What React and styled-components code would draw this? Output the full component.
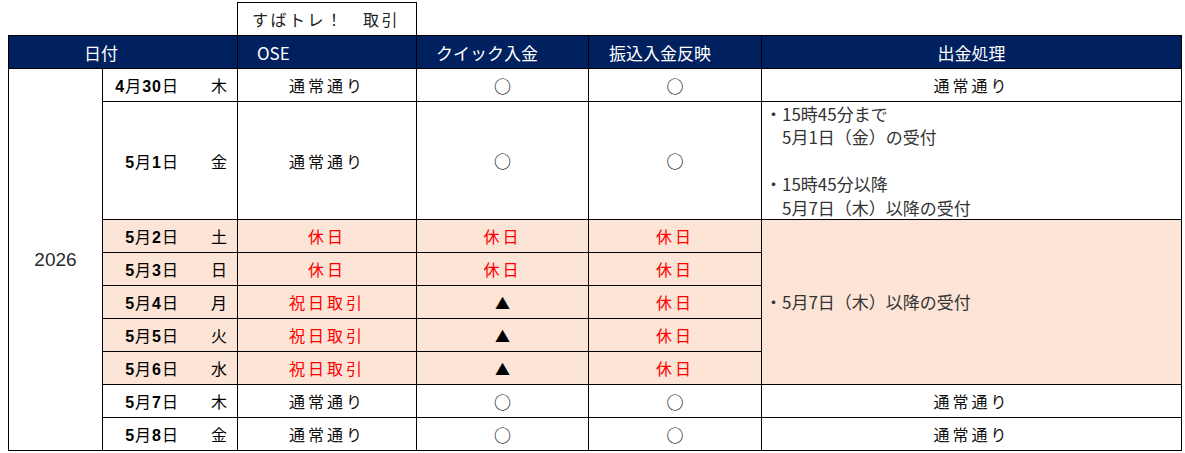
import styled, { createGlobalStyle } from "styled-components";

const GlobalStyle = createGlobalStyle`
  body {
    margin: 0;
    background: #fff;
    font-family: "Noto Sans CJK JP", "Liberation Sans", sans-serif;
  }
`;

const Table = styled.table`
  border-collapse: collapse;
  table-layout: fixed;
  width: 1173px;
  margin: 2px 0 0 8px;
`;

const Col = styled.col`
  width: ${(p) => p.$w}px;
`;

const Row = styled.tr`
  height: ${(p) => (p.$tall ? 117 : 33)}px;
`;

const Blank = styled.td`
  border: none;
  padding: 0;
`;

const TopLabel = styled.td`
  border: 1px solid #000;
  border-bottom: none;
  padding: 0 0 0 14px;
  font-size: 16px;
  letter-spacing: 2.5px;
  color: #222;
  white-space: nowrap;
`;

const Head = styled.th`
  background: #002060;
  color: #fff;
  border: 1px solid #000;
  font-weight: normal;
  font-size: 17px;
  padding: 0 0 0 ${(p) => p.$indent || 0}px;
  text-align: ${(p) => (p.$center ? "center" : "left")};
  white-space: nowrap;
`;

const Cell = styled.td`
  border: 1px solid #000;
  padding: 0;
  text-align: center;
  font-size: 16px;
  letter-spacing: 3px;
  color: ${(p) => (p.$red ? "#ff0000" : "#111")};
  background: ${(p) => (p.$pink ? "#fce4d6" : "#fff")};
  white-space: nowrap;
`;

const YearCell = styled.td`
  border: 1px solid #000;
  text-align: center;
  font-family: "Liberation Sans", sans-serif;
  font-size: 19px;
  color: #2b2b2b;
`;

const DateCell = styled.td`
  border: 1px solid #000;
  padding: 0;
  background: ${(p) => (p.$pink ? "#fce4d6" : "#fff")};
`;

const DateWrap = styled.div`
  display: flex;
  align-items: center;
  font-size: 16px;
  color: #000;
`;

const DateText = styled.span`
  width: 76px;
  text-align: right;
  white-space: nowrap;
  letter-spacing: 1px;
  font-family: "Liberation Sans", "Noto Sans CJK JP", sans-serif;

  b {
    font-weight: bold;
  }
`;

const Weekday = styled.span`
  margin-left: 32px;
`;

const Mark = styled.span`
  font-size: ${(p) => (p.$tri ? 15 : 17)}px;
  letter-spacing: 0;
  color: #000;
`;

const NoteCell = styled.td`
  border: 1px solid #000;
  padding: 0 0 0 3px;
  text-align: left;
  font-size: 17px;
  line-height: 23.4px;
  color: #333;
  background: ${(p) => (p.$pink ? "#fce4d6" : "#fff")};
  vertical-align: middle;
`;

const NoteLine = styled.div`
  white-space: nowrap;
  min-height: 23.4px;
`;

const rows = [
  { m: "4", d: "30", w: "木", kind: "normal", out: "plain" },
  { m: "5", d: "1", w: "金", kind: "normal", out: "split", tall: true },
  { m: "5", d: "2", w: "土", kind: "holiday", out: "merged" },
  { m: "5", d: "3", w: "日", kind: "holiday" },
  { m: "5", d: "4", w: "月", kind: "trade" },
  { m: "5", d: "5", w: "火", kind: "trade" },
  { m: "5", d: "6", w: "水", kind: "trade" },
  { m: "5", d: "7", w: "木", kind: "normal", out: "plain" },
  { m: "5", d: "8", w: "金", kind: "normal", out: "plain" },
];

const Circle = () => <Mark>○</Mark>;

const OutCell = ({ type }) => {
  if (type === "plain") return <Cell>通常通り</Cell>;
  if (type === "split")
    return (
      <NoteCell>
        <NoteLine>・15時45分まで</NoteLine>
        <NoteLine>　5月1日（金）の受付</NoteLine>
        <NoteLine />
        <NoteLine>・15時45分以降</NoteLine>
        <NoteLine>　5月7日（木）以降の受付</NoteLine>
      </NoteCell>
    );
  if (type === "merged")
    return (
      <NoteCell $pink rowSpan={5}>
        <NoteLine>・5月7日（木）以降の受付</NoteLine>
      </NoteCell>
    );
  return null;
};

const App = () => {
  return (
    <>
      <GlobalStyle />
      <Table>
        <colgroup>
          <Col $w={94} />
          <Col $w={135} />
          <Col $w={179} />
          <Col $w={172} />
          <Col $w={173} />
          <Col $w={420} />
        </colgroup>
        <tbody>
          <Row>
            <Blank />
            <Blank />
            <TopLabel>すばトレ！　取引</TopLabel>
            <Blank />
            <Blank />
            <Blank />
          </Row>
          <Row>
            <Head colSpan={2} $indent={75}>日付</Head>
            <Head $indent={19}>OSE</Head>
            <Head $indent={19}>クイック入金</Head>
            <Head $indent={20}>振込入金反映</Head>
            <Head $center>出金処理</Head>
          </Row>
          {rows.map((r, i) => {
            const pink = r.kind !== "normal";
            return (
              <Row key={i} $tall={r.tall}>
                {i === 0 && <YearCell rowSpan={rows.length}>2026</YearCell>}
                <DateCell $pink={pink}>
                  <DateWrap>
                    <DateText>
                      <b>{r.m}</b>月<b>{r.d}</b>日
                    </DateText>
                    <Weekday>{r.w}</Weekday>
                  </DateWrap>
                </DateCell>
                {r.kind === "normal" && (
                  <>
                    <Cell>通常通り</Cell>
                    <Cell><Circle /></Cell>
                    <Cell><Circle /></Cell>
                  </>
                )}
                {r.kind === "holiday" && (
                  <>
                    <Cell $pink $red>休日</Cell>
                    <Cell $pink $red>休日</Cell>
                    <Cell $pink $red>休日</Cell>
                  </>
                )}
                {r.kind === "trade" && (
                  <>
                    <Cell $pink $red>祝日取引</Cell>
                    <Cell $pink><Mark $tri>▲</Mark></Cell>
                    <Cell $pink $red>休日</Cell>
                  </>
                )}
                {r.out && <OutCell type={r.out} />}
              </Row>
            );
          })}
        </tbody>
      </Table>
    </>
  );
};

export default App;
